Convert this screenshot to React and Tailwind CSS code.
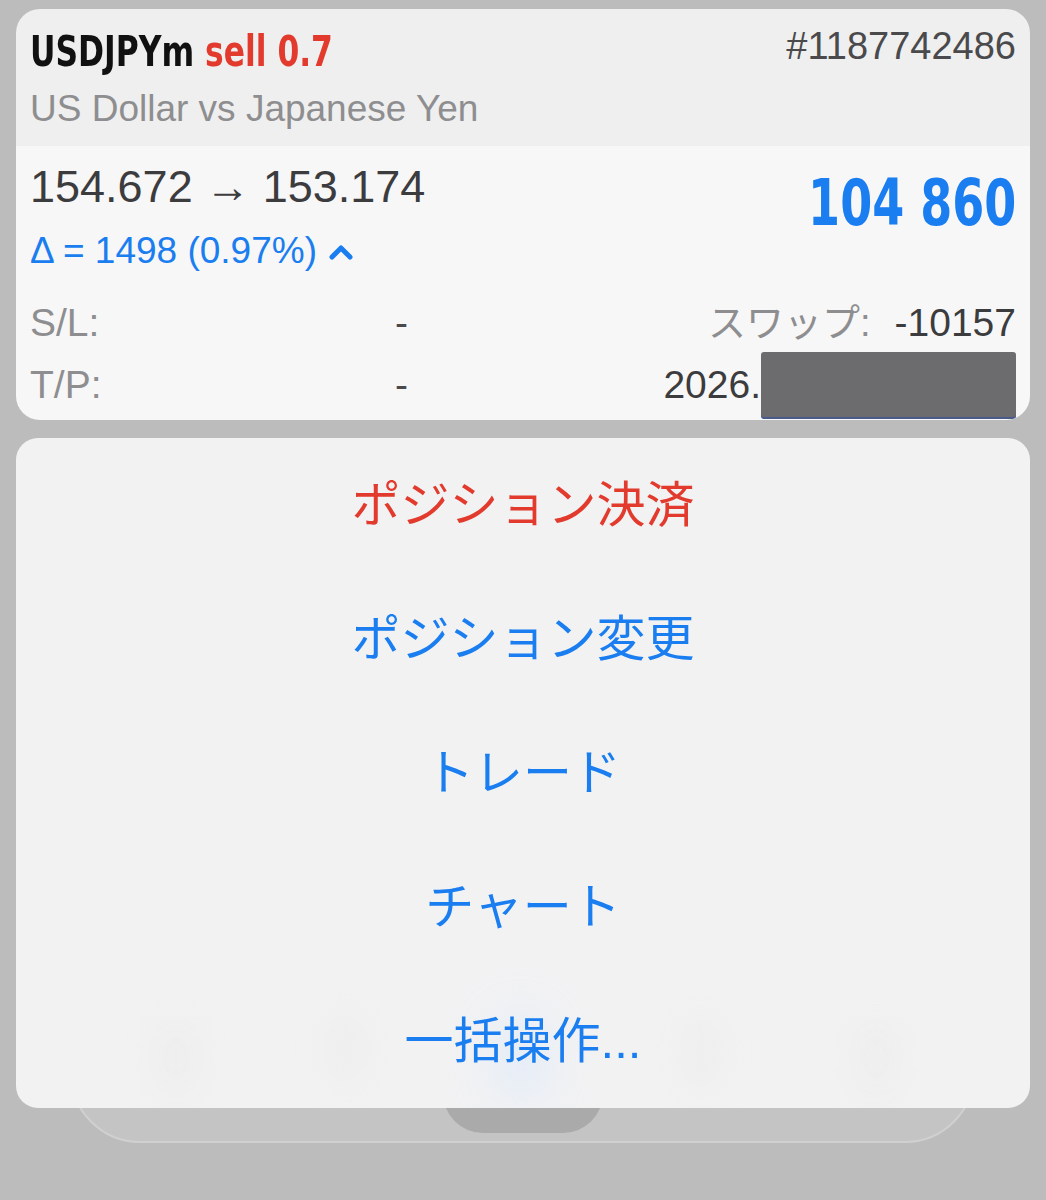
import React from "react";

const sans = { fontFamily: '"Liberation Sans", Arial, sans-serif' };
const narrow = { fontFamily: '"DejaVu Sans Condensed", "Liberation Sans", sans-serif' };
const jp = { fontFamily: '"Liberation Sans", "Noto Sans CJK JP", sans-serif' };

function PositionCard() {
  return (
    <div className="mx-[16px] mt-[9px] rounded-[24px] overflow-hidden">
      <div className="h-[137px] bg-[#efefef] px-[14px] pt-[18px]">
        <div className="flex justify-between items-start h-[44px]">
          <div className="pt-[4px] text-[42px] leading-none font-bold origin-left scale-x-[0.83]" style={narrow}>
            <span className="text-[#111111]">USDJPYm</span>
            <span className="text-[#e23a2c]"> sell 0.7</span>
          </div>
          <div className="text-[38px] leading-none text-[#4a4a4c]" style={sans}>#1187742486</div>
        </div>
        <div className="mt-[19px] text-[37px] leading-none text-[#8e8e90]" style={sans}>
          US Dollar vs Japanese Yen
        </div>
      </div>

      <div className="h-[274px] bg-[#f7f7f7] px-[14px]">
        <div className="flex justify-between items-start">
          <div className="pt-[18px]">
            <div className="text-[45px] leading-none text-[#3c3c3e]" style={sans}>154.672 → 153.174</div>
            <div className="mt-[23px] flex items-center text-[37px] leading-none text-[#1a7ef0]" style={sans}>
              <span>Δ = 1498 (0.97%)</span>
              <svg className="ml-[12px] mt-[2px]" width="24" height="16" viewBox="0 0 24 16">
                <polyline points="3,13 12,4 21,13" fill="none" stroke="#1a7ef0" strokeWidth="5" strokeLinecap="round" strokeLinejoin="round" />
              </svg>
            </div>
          </div>
          <div className="pt-[25px] text-[64px] leading-none font-bold text-[#1a7ef0] origin-right scale-x-[0.8]" style={narrow}>
            104 860
          </div>
        </div>

        <div className="mt-[34px] flex items-center h-[39px] text-[39px] leading-none" style={sans}>
          <span className="w-[365px] text-[#8e8e90]">S/L:</span>
          <span className="text-[#4a4a4c]">-</span>
          <div className="flex-1 flex justify-end items-center">
            <span className="text-[38px] text-[#8e8e90]" style={jp}>スワップ:</span>
            <span className="ml-[24px] text-[#3c3c3e]">-10157</span>
          </div>
        </div>

        <div className="mt-[23px] flex items-center h-[39px] text-[39px] leading-none" style={sans}>
          <span className="w-[365px] text-[#8e8e90]">T/P:</span>
          <span className="text-[#4a4a4c]">-</span>
          <div className="flex-1 flex justify-end items-center h-[39px]">
            <span className="text-[#3c3c3e]">2026.</span>
            <span className="w-[255px] h-[65px] shrink-0 rounded-[3px] bg-[#6c6c6e] shadow-[0_2px_0_#4a5a8a]" />
          </div>
        </div>
      </div>
    </div>
  );
}

const items = [
  { label: "ポジション決済", color: "text-[#e23a2c]" },
  { label: "ポジション変更", color: "text-[#1a7ef0]" },
  { label: "トレード", color: "text-[#1a7ef0]" },
  { label: "チャート", color: "text-[#1a7ef0]" },
  { label: "一括操作...", color: "text-[#1a7ef0]" },
];

function ActionMenu() {
  return (
    <div className="relative z-10 mx-[16px] mt-[18px] rounded-[22px] bg-[#f2f2f3] overflow-hidden">
      <div className="absolute inset-0 pointer-events-none">
        <div className="absolute left-[145px] top-[585px] w-[30px] h-[70px] rounded-full bg-[#e8e8e8] blur-lg opacity-50" />
        <div className="absolute left-[315px] top-[575px] w-[30px] h-[70px] rounded-full bg-[#e8e8e8] blur-lg opacity-50" />
        <div className="absolute left-[480px] top-[575px] w-[50px] h-[90px] rounded-full bg-[#dce9fb] blur-xl opacity-70" />
        <div className="absolute left-[670px] top-[580px] w-[30px] h-[70px] rounded-full bg-[#e8e8e8] blur-lg opacity-50" />
        <div className="absolute left-[845px] top-[585px] w-[30px] h-[70px] rounded-full bg-[#e8e8e8] blur-lg opacity-50" />
      </div>
      {items.map((it) => (
        <div key={it.label} className="relative h-[134px] flex items-center justify-center">
          <span className={`text-[49px] leading-none ${it.color}`} style={jp}>{it.label}</span>
        </div>
      ))}
    </div>
  );
}

export default function App() {
  return (
    <div className="relative w-[1046px] h-[1200px] bg-[#bcbcbc] overflow-hidden">
      <div className="absolute left-[70px] right-[71px] top-[940px] h-[203px] rounded-b-[70px] rounded-t-[40px] bg-[#c4c4c4] border-[2px] border-[#d0d0d0]">
        <div className="absolute left-[371px] bottom-[8px] w-[160px] h-[60px] rounded-b-[40px] rounded-t-[20px] bg-[#aaaaaa]" />
      </div>
      <PositionCard />
      <ActionMenu />
    </div>
  );
}
